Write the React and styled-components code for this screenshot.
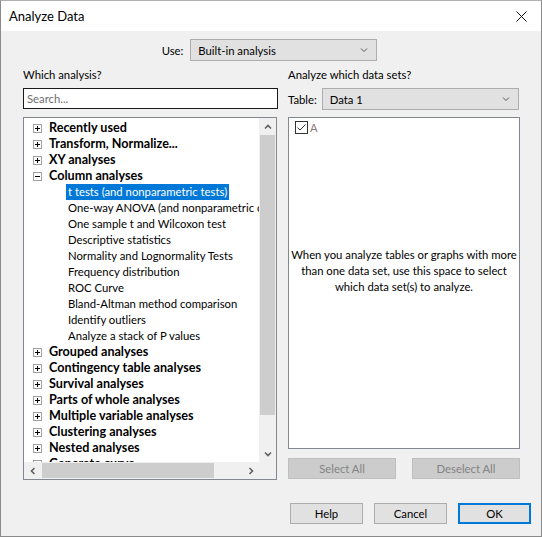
import React from "react";
import styled, { createGlobalStyle, css } from "styled-components";

const Global = createGlobalStyle`
  html, body { margin: 0; padding: 0; background: #f0f0f0; }
  body { font-family: Lato, "Noto Sans", sans-serif; font-size: 11.3px; color: #000; }
  * { box-sizing: border-box; }
`;

const Window = styled.div`
  width: 542px;
  height: 537px;
  display: flex;
  flex-direction: column;
  border: 1px solid #8a8a8a;
  border-top-color: #b0b0b0;
  background: #f0f0f0;
  overflow: hidden;
`;

const TitleBar = styled.div`
  height: 30px;
  flex: none;
  background: #fff;
  display: flex;
  align-items: center;
  justify-content: space-between;
  padding: 0 14px 0 8px;
  font-size: 13px;
`;

const Body = styled.div`
  flex: 1;
  display: flex;
  flex-direction: column;
  padding: 8px 10px 0 22px;
`;

const UseRow = styled.div`
  display: flex;
  align-items: center;
  justify-content: center;
  gap: 7px;
  padding-right: 15px;
  height: 22px;
`;

const Select = styled.div`
  height: 22px;
  width: ${(p) => p.$w}px;
  background: #e1e1e1;
  border: 1px solid #adadad;
  display: flex;
  align-items: center;
  justify-content: space-between;
  padding: 0 8px 0 7px;
`;

const Columns = styled.div`
  display: grid;
  grid-template-columns: 255px 232px;
  column-gap: 10px;
  margin-top: 6px;
`;

const Col = styled.div`
  display: flex;
  flex-direction: column;
`;

const Heading = styled.div`
  height: 16px;
  line-height: 16px;
  margin-bottom: 5px;
`;

const Search = styled.div`
  height: 21px;
  border: 1px solid #1a1a1a;
  background: #fff;
  color: #6d6d6d;
  display: flex;
  align-items: center;
  padding-left: 3px;
`;

const TreeBox = styled.div`
  margin-top: 8px;
  width: 254px;
  height: 363px;
  border: 1px solid #828790;
  background: #fff;
  display: grid;
  grid-template-columns: 1fr 17px;
  grid-template-rows: 1fr 17px;
`;

const TreeList = styled.div`
  overflow: hidden;
  padding-top: 2px;
`;

const Row = styled.div`
  height: 16px;
  display: flex;
  align-items: center;
  white-space: nowrap;
  padding-left: ${(p) => (p.$child ? 42 : 9)}px;
`;

const Expander = styled.span`
  width: 9px;
  height: 9px;
  border: 1px solid #a0a0a0;
  position: relative;
  margin-right: 14px;
  flex: none;
  &::before {
    content: "";
    position: absolute;
    left: 1px;
    right: 1px;
    top: 3px;
    height: 1px;
    background: #000;
  }
  ${(p) =>
    p.$plus &&
    css`
      &::after {
        content: "";
        position: absolute;
        top: 1px;
        bottom: 1px;
        left: 3px;
        width: 1px;
        background: #000;
      }
    `}
`;

const Label = styled.span`
  font-weight: ${(p) => (p.$bold ? 700 : 400)};
  font-size: ${(p) => (p.$bold ? "12.6px" : "inherit")};
  padding: 0 2px;
  height: 16px;
  line-height: 16px;
  margin-left: ${(p) => (p.$bold ? -9 : 0)}px;
  ${(p) =>
    p.$selected &&
    css`
      background: #0078d7;
      color: #fff;
    `}
`;

const VScroll = styled.div`
  background: #f0f0f0;
  display: flex;
  flex-direction: column;
  align-items: center;
`;

const HScroll = styled.div`
  background: #f0f0f0;
  display: flex;
  align-items: center;
`;

const Corner = styled.div`
  background: #f0f0f0;
`;

const ArrowBtn = styled.div`
  width: 17px;
  height: 17px;
  flex: none;
  display: flex;
  align-items: center;
  justify-content: center;
`;

const VThumb = styled.div`
  width: 15px;
  height: 280px;
  background: #cdcdcd;
`;

const HThumb = styled.div`
  height: 15px;
  width: 172px;
  background: #cdcdcd;
  margin-left: 1px;
`;

const Spacer = styled.div`
  flex: 1;
`;

const TableRow = styled.div`
  display: flex;
  align-items: center;
  gap: 5px;
  height: 22px;
`;

const DataBox = styled.div`
  margin-top: 7px;
  height: 332px;
  border: 1px solid #828790;
  background: #fff;
  display: flex;
  flex-direction: column;
  padding: 2px 6px;
`;

const CheckRow = styled.div`
  display: flex;
  align-items: center;
  gap: 2px;
  color: #8a7878;
  height: 14px;
`;

const Hint = styled.div`
  margin-top: 113px;
  text-align: center;
  line-height: 16px;
  white-space: nowrap;
  margin-left: -6px;
  margin-right: -6px;
`;

const BtnRow = styled.div`
  display: flex;
  justify-content: space-between;
  margin-top: 9px;
`;

const Button = styled.div`
  width: ${(p) => p.$w}px;
  height: ${(p) => p.$h || 21}px;
  display: flex;
  align-items: center;
  justify-content: center;
  background: ${(p) => (p.$disabled ? "#cccccc" : "#e1e1e1")};
  border: ${(p) => (p.$default ? "2px solid #0078d7" : p.$disabled ? "1px solid #bfbfbf" : "1px solid #adadad")};
  color: ${(p) => (p.$disabled ? "#838383" : "#000")};
`;

const Footer = styled.div`
  display: flex;
  justify-content: flex-end;
  gap: 11px;
  margin-top: 23px;
`;

const Chevron = ({ dir = "down", color = "#555", size = 8, w = 1 }) => {
  const paths = {
    down: "M1 2.5 L4 5.5 L7 2.5",
    up: "M1 5.5 L4 2.5 L7 5.5",
    left: "M5.5 1 L2.5 4 L5.5 7",
    right: "M2.5 1 L5.5 4 L2.5 7",
  };
  return (
    <svg width={size} height={size} viewBox="0 0 8 8">
      <path d={paths[dir]} fill="none" stroke={color} strokeWidth={w} />
    </svg>
  );
};

const CheckBox = () => (
  <svg width="13" height="13" viewBox="0 0 13 13">
    <rect x="0.5" y="0.5" width="12" height="12" fill="#fff" stroke="#333" />
    <path d="M2.5 6.5 L5 9 L10.5 3.5" fill="none" stroke="#333" strokeWidth="1" />
  </svg>
);

const CloseIcon = () => (
  <svg width="11" height="11" viewBox="0 0 11 11">
    <path d="M0.5 0.5 L10.5 10.5 M10.5 0.5 L0.5 10.5" stroke="#111" strokeWidth="1" />
  </svg>
);

const groups = [
  { name: "Recently used" },
  { name: "Transform, Normalize..." },
  { name: "XY analyses" },
  {
    name: "Column analyses",
    open: true,
    children: [
      "t tests (and nonparametric tests)",
      "One-way ANOVA (and nonparametric or mixed)",
      "One sample t and Wilcoxon test",
      "Descriptive statistics",
      "Normality and Lognormality Tests",
      "Frequency distribution",
      "ROC Curve",
      "Bland-Altman method comparison",
      "Identify outliers",
      "Analyze a stack of P values",
    ],
  },
  { name: "Grouped analyses" },
  { name: "Contingency table analyses" },
  { name: "Survival analyses" },
  { name: "Parts of whole analyses" },
  { name: "Multiple variable analyses" },
  { name: "Clustering analyses" },
  { name: "Nested analyses" },
  { name: "Generate curve" },
];

export default function App() {
  return (
    <>
      <Global />
      <Window>
        <TitleBar>
          <span>Analyze Data</span>
          <CloseIcon />
        </TitleBar>
        <Body>
          <UseRow>
            <span>Use:</span>
            <Select $w={187}>
              <span>Built-in analysis</span>
              <Chevron />
            </Select>
          </UseRow>
          <Columns>
            <Col>
              <Heading>Which analysis?</Heading>
              <Search>Search...</Search>
              <TreeBox>
                <TreeList>
                  {groups.map((g) => (
                    <React.Fragment key={g.name}>
                      <Row>
                        <Expander $plus={!g.open} />
                        <Label $bold>{g.name}</Label>
                      </Row>
                      {g.open &&
                        g.children.map((c, i) => (
                          <Row $child key={c}>
                            <Label $selected={i === 0}>{c}</Label>
                          </Row>
                        ))}
                    </React.Fragment>
                  ))}
                </TreeList>
                <VScroll>
                  <ArrowBtn>
                    <Chevron dir="up" color="#606060" w={1.6} />
                  </ArrowBtn>
                  <VThumb />
                  <Spacer />
                  <ArrowBtn>
                    <Chevron dir="down" color="#606060" w={1.6} />
                  </ArrowBtn>
                </VScroll>
                <HScroll>
                  <ArrowBtn>
                    <Chevron dir="left" color="#606060" w={1.6} />
                  </ArrowBtn>
                  <HThumb />
                  <Spacer />
                  <ArrowBtn>
                    <Chevron dir="right" color="#606060" w={1.6} />
                  </ArrowBtn>
                </HScroll>
                <Corner />
              </TreeBox>
            </Col>
            <Col>
              <Heading>Analyze which data sets?</Heading>
              <TableRow>
                <span>Table:</span>
                <Select $w={197}>
                  <span>Data 1</span>
                  <Chevron />
                </Select>
              </TableRow>
              <DataBox>
                <CheckRow>
                  <CheckBox />
                  <span>A</span>
                </CheckRow>
                <Hint>
                  When you analyze tables or graphs with more
                  <br />
                  than one data set, use this space to select
                  <br />
                  which data set(s) to analyze.
                </Hint>
              </DataBox>
              <BtnRow>
                <Button $w={108} $disabled>Select All</Button>
                <Button $w={108} $disabled>Deselect All</Button>
              </BtnRow>
            </Col>
          </Columns>
          <Footer>
            <Button $w={73}>Help</Button>
            <Button $w={73}>Cancel</Button>
            <Button $w={73} $default>OK</Button>
          </Footer>
        </Body>
      </Window>
    </>
  );
}
